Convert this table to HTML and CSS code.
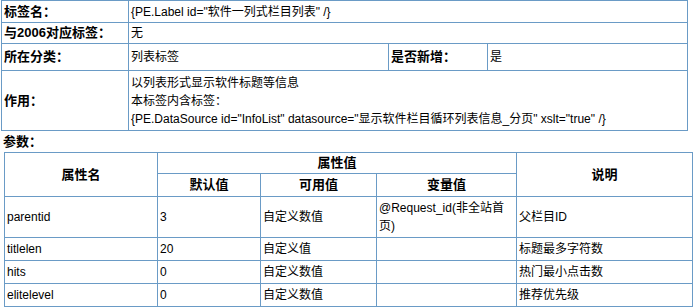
FILE: index.html
```html
<!DOCTYPE html>
<html lang="zh">
<head>
<meta charset="utf-8">
<title>标签说明</title>
<link rel="stylesheet" href="styles.css">
</head>
<body>
<table class="info">
  <colgroup>
    <col class="c1"><col class="c2"><col class="c3"><col class="c4">
  </colgroup>
  <tr class="r1">
    <th>标签名：</th>
    <td colspan="3">{PE.Label id="软件一列式栏目列表" /}</td>
  </tr>
  <tr class="r2">
    <th>与2006对应标签：</th>
    <td colspan="3">无</td>
  </tr>
  <tr class="r3">
    <th>所在分类：</th>
    <td>列表标签</td>
    <th>是否新增：</th>
    <td>是</td>
  </tr>
  <tr class="r4">
    <th>作用：</th>
    <td colspan="3" class="multi">以列表形式显示软件标题等信息<br>本标签内含标签：<br>{PE.DataSource id="InfoList" datasource="显示软件栏目循环列表信息_分页" xslt="true" /}</td>
  </tr>
</table>
<div class="section">参数：</div>
<table class="params">
  <colgroup>
    <col class="p1"><col class="p2"><col class="p3"><col class="p4"><col class="p5">
  </colgroup>
  <tr class="h1">
    <th rowspan="2">属性名</th>
    <th colspan="3">属性值</th>
    <th rowspan="2">说明</th>
  </tr>
  <tr class="h2">
    <th>默认值</th>
    <th>可用值</th>
    <th>变量值</th>
  </tr>
  <tr class="tall">
    <td>parentid</td>
    <td>3</td>
    <td>自定义数值</td>
    <td>@Request_id(非全站首页)</td>
    <td>父栏目ID</td>
  </tr>
  <tr class="row">
    <td>titlelen</td>
    <td>20</td>
    <td>自定义值</td>
    <td></td>
    <td>标题最多字符数</td>
  </tr>
  <tr class="row">
    <td>hits</td>
    <td>0</td>
    <td>自定义数值</td>
    <td></td>
    <td>热门最小点击数</td>
  </tr>
  <tr class="row">
    <td>elitelevel</td>
    <td>0</td>
    <td>自定义数值</td>
    <td></td>
    <td>推荐优先级</td>
  </tr>
</table>
</body>
</html>
```
FILE: styles.css
```css
html, body {
  margin: 0;
  padding: 0;
  background: #ffffff;
}
body {
  font-family: "Liberation Sans", "Noto Sans CJK SC", sans-serif;
  font-size: 12px;
  color: #000;
}
table {
  border-collapse: collapse;
  table-layout: fixed;
}
td, th {
  border: 1px solid #6a9bc6;
  padding: 0 2px;
  line-height: 18px;
  vertical-align: middle;
}
th {
  font-weight: bold;
  font-size: 13px;
}
.info {
  margin-left: 1px;
  width: 686px;
}
.info th {
  text-align: left;
}
.c1 { width: 127px; }
.c2 { width: 260px; }
.c3 { width: 99px; }
.c4 { width: 200px; }
.r1 td, .r1 th { height: 21px; }
.r2 td, .r2 th { height: 20px; }
.r3 td, .r3 th { height: 26px; }
.r4 td, .r4 th { height: 59px; }
.section {
  font-weight: bold;
  font-size: 13px;
  line-height: 20px;
  padding-left: 3px;
  margin-top: 1px;
}
.params {
  margin-left: 4px;
  width: 688px;
}
.params th { text-align: center; }
.p1 { width: 153px; }
.p2 { width: 103px; }
.p3 { width: 116px; }
.p4 { width: 140px; }
.p5 { width: 176px; }
.h1 th { height: 20px; }
.h2 th { height: 22px; }
.tall td { height: 40px; }
.row td { height: 22px; }
.params td { font-size: 12px; }
```
